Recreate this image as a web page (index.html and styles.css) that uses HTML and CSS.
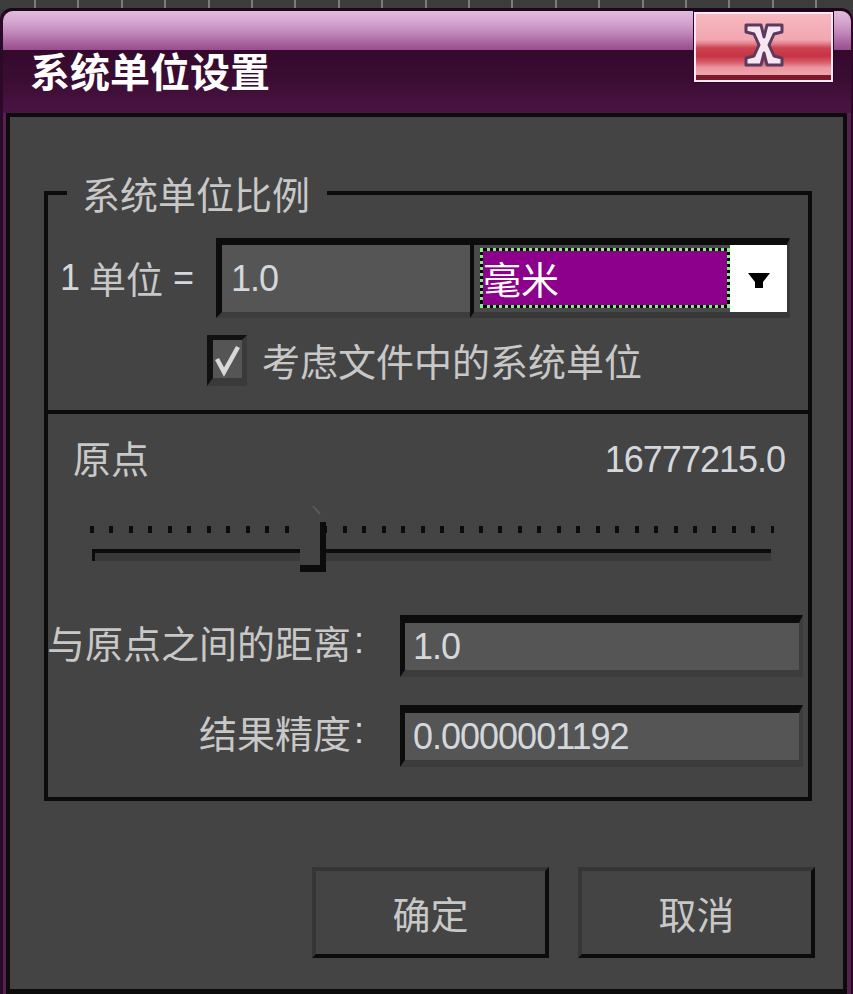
FILE: index.html
```html
<!DOCTYPE html>
<html lang="zh-CN">
<head>
<meta charset="utf-8">
<title>系统单位设置</title>
<link rel="stylesheet" href="styles.css">
</head>
<body>
<div class="screen">
  <div class="topstrip"></div>
  <div class="window">
    <div class="titlebar">
      <div class="title">系统单位设置</div>
      <button class="close" type="button" aria-label="关闭">
        <svg width="40" height="44" viewBox="-2 -2 40 44">
          <path d="M0 0 H15 L18 12 L21 0 H36 V7 L28 9 L23 20 L28 31 L36 33 V40 H21 L18 28 L15 40 H0 V33 L8 31 L13 20 L8 9 L0 7 Z" fill="#f6e6f2" stroke="#5c3a5e" stroke-width="3" stroke-linejoin="round"/>
        </svg>
      </button>
    </div>
    <div class="body">
      <fieldset class="group">
        <legend class="legend">系统单位比例</legend>
        <div class="scale-section">
          <div class="unit-row">
            <div class="unit-label"><span class="num">1</span><span>单位</span><span class="num">=</span></div>
            <div class="field unit-field"><span class="num">1.0</span></div>
            <div class="select">
              <div class="sel-value">毫米</div>
              <div class="sel-arrow">
                <svg width="22" height="16" viewBox="0 0 22 16"><path d="M0 0 H22 L15 9 V15 H7 V9 Z" fill="#000"/></svg>
              </div>
            </div>
          </div>
          <div class="check-row">
            <span class="checkbox">
              <svg width="29" height="38" viewBox="0 0 29 38"><path d="M4 19 L11 32 L25 7" fill="none" stroke="#d8d8d8" stroke-width="4.5"/></svg>
            </span>
            <span class="check-label">考虑文件中的系统单位</span>
          </div>
        </div>
        <div class="origin-section">
          <div class="origin-head">
            <span class="origin-label">原点</span>
            <span class="num origin-value">16777215.0</span>
          </div>
          <div class="slider">
            <div class="ticks"></div>
            <div class="track"></div>
            <svg class="thumb" width="26" height="66" viewBox="0 0 26 66">
              <path d="M0 16 L13 0 L20 8 V59 H0 Z" fill="#444"/>
              <path d="M13 0 L20 8" stroke="#5a5a5a" stroke-width="2"/>
              <path d="M20 16 H26 V66 H0 V59 H20 Z" fill="#0c0c0c"/>
            </svg>
          </div>
          <div class="form-grid">
            <span class="form-label">与原点之间的距离<span class="num">:</span></span>
            <div class="field wide-field"><span class="num">1.0</span></div>
            <span class="form-label">结果精度<span class="num">:</span></span>
            <div class="field wide-field"><span class="num">0.0000001192</span></div>
          </div>
        </div>
      </fieldset>
      <div class="buttons">
        <button class="btn" type="button">确定</button>
        <button class="btn" type="button">取消</button>
      </div>
    </div>
  </div>
</div>
</body>
</html>
```
FILE: styles.css
```css
* { box-sizing: border-box; }
html, body { margin: 0; padding: 0; background: #3c3c3c; overflow: hidden; }
body {
  font-family: "Noto Sans CJK SC", "Noto Sans", sans-serif;
  color: #c8c8c8;
}
.screen { width: 853px; height: 994px; display: flex; flex-direction: column; }
.topstrip {
  height: 8px;
  flex: none;
  background: repeating-linear-gradient(90deg, transparent 0 34px, #7c7c7c 34px 36px, transparent 36px 43.4px), #3d3d3d;
}
.window {
  flex: 1;
  display: flex;
  flex-direction: column;
  background: #56204f;
  border-top: 3px solid #1c0719;
  border-left: 3px solid #2a0a27;
  border-right: 2px solid #2a0a27;
  border-radius: 12px 12px 0 0;
  padding: 0 4px 0 3px;
}
.titlebar {
  height: 102px;
  flex: none;
  margin: 0 -4px 0 -3px;
  display: flex;
  border-radius: 10px 10px 0 0;
  background: linear-gradient(to bottom,
    #e2bade 0, #d8acd4 8px, #cc98c6 16px, #bb80b4 24px, #a8629e 32px, #9a4c90 39px,
    #34092c 39px, #3c0d34 70px, #4a1443 102px);
}
.title {
  margin: 34px 0 0 27px;
  font-size: 40px;
  line-height: 50px;
  font-weight: 700;
  color: #ffffff;
  letter-spacing: 0;
}
.close {
  margin: 1px 18px 0 auto;
  width: 139px;
  height: 70px;
  padding: 0;
  display: flex;
  align-items: center;
  justify-content: center;
  border: 2px solid #fde8f4;
  outline: 1px solid #2a0626;
  background: linear-gradient(to bottom,
    #f7b8c0 0, #f2a6b0 26px, #e07a88 30px, #cc4252 34px, #c63444 42px, #d85a68 48px,
    #eb9aa4 54px, #f1aab2 100%);
  box-shadow: inset 0 -5px 0 #7c1a2c;
}
.close svg { margin-top: -4px; }
.body {
  flex: 1;
  display: flex;
  flex-direction: column;
  background: #444444;
  border: 4px solid #0c0c0c;
  border-bottom-width: 5px;
  padding: 55px 31px 31px 34px;
}
.num {
  font-family: "Liberation Sans", Arial, sans-serif;
  font-size: 36px;
  letter-spacing: -1px;
  color: #d4d8dc;
}
.group {
  margin: 0;
  padding: 0;
  min-width: 0;
  border: 4px solid #0c0c0c;
}
.legend {
  margin-left: 19px;
  padding: 0 17px 0 15px;
  font-size: 38px;
  line-height: 42px;
  color: #c8c8c8;
}
.scale-section {
  padding: 24px 18px 25px 12px;
  border-bottom: 4px solid #0c0c0c;
}
.unit-row { display: flex; height: 80px; }
.unit-label {
  width: 156px;
  display: flex;
  align-items: center;
  gap: 10px;
  font-size: 37px;
}
.field {
  display: flex;
  align-items: center;
  background: #555555;
  border-top: 7px solid #0c0c0c;
  border-left: 6px solid #0c0c0c;
  border-bottom: 6px solid #3c3c3c;
}
.unit-field { width: 254px; padding-left: 9px; }
.select {
  width: 320px;
  display: flex;
  background: #4a4a4a;
  border-top: 7px solid #0c0c0c;
  border-left: 4px solid #0c0c0c;
  border-right: 3px solid #383838;
  border-bottom: 6px solid #383838;
  padding-left: 6px;
}
.sel-value {
  flex: 1;
  margin: 3px 0 4px;
  border: 3px dotted #80f080;
  background: linear-gradient(#8c008c, #8c008c) padding-box, linear-gradient(#000, #000) border-box;
  color: #ffffff;
  font-size: 38px;
  line-height: 50px;
  padding-left: 0;
  display: flex;
  align-items: center;
}
.sel-arrow {
  width: 57px;
  background: #ffffff;
  display: flex;
  align-items: flex-start;
  justify-content: center;
  padding-top: 28px;
}
.check-row {
  display: flex;
  align-items: center;
  margin-top: 17px;
  height: 50px;
  padding-left: 147px;
  gap: 15px;
}
.checkbox {
  width: 40px;
  height: 51px;
  flex: none;
  background: #555555;
  border-top: 5px solid #111;
  border-left: 6px solid #111;
  border-right: 5px solid #3a3a3a;
  border-bottom: 8px solid #3a3a3a;
  display: flex;
}
.check-label { font-size: 38px; line-height: 50px; }
.origin-section { padding: 18px 5px 30px 0; }
.origin-head {
  display: flex;
  justify-content: space-between;
  align-items: flex-end;
  padding: 0 18px 0 25px;
  height: 50px;
}
.origin-label { font-size: 38px; line-height: 50px; }
.origin-value { line-height: 44px; }
.slider {
  position: relative;
  margin: 24px 29px 0 42px;
  padding-top: 20px;
  height: 66px;
}
.ticks {
  height: 7px;
  background: repeating-linear-gradient(90deg, #0c0c0c 0 4px, transparent 4px 19.45px);
}
.track {
  margin: 16px 3px 0 2px;
  height: 12px;
  background: #393939;
  border-top: 4px solid #0c0c0c;
  border-left: 3px solid #0c0c0c;
}
.thumb { position: absolute; left: 210px; top: 0; }
.form-grid {
  display: grid;
  grid-template-columns: 315px 403px;
  column-gap: 37px;
  row-gap: 28px;
  margin-top: 43px;
}
.form-label {
  height: 62px;
  display: flex;
  align-items: center;
  justify-content: flex-end;
  white-space: nowrap;
  font-size: 38px;
  padding-bottom: 10px;
}
.form-label .num { margin-left: 3px; }
.wide-field {
  height: 62px;
  border-top-width: 8px;
  border-left-width: 5px;
  border-bottom-width: 7px;
  border-right: 4px solid #3c3c3c;
  padding-left: 8px;
}
.buttons {
  margin-top: auto;
  margin-right: -3px;
  display: flex;
  justify-content: flex-end;
  gap: 29px;
}
.btn {
  width: 237px;
  height: 91px;
  background: #444444;
  border-top: 4px solid #363636;
  border-left: 4px solid #363636;
  border-right: 4px solid #0c0c0c;
  border-bottom: 4px solid #0c0c0c;
  color: #c8c8c8;
  font-family: "Noto Sans CJK SC", sans-serif;
  font-size: 38px;
  padding: 0;
}
```
